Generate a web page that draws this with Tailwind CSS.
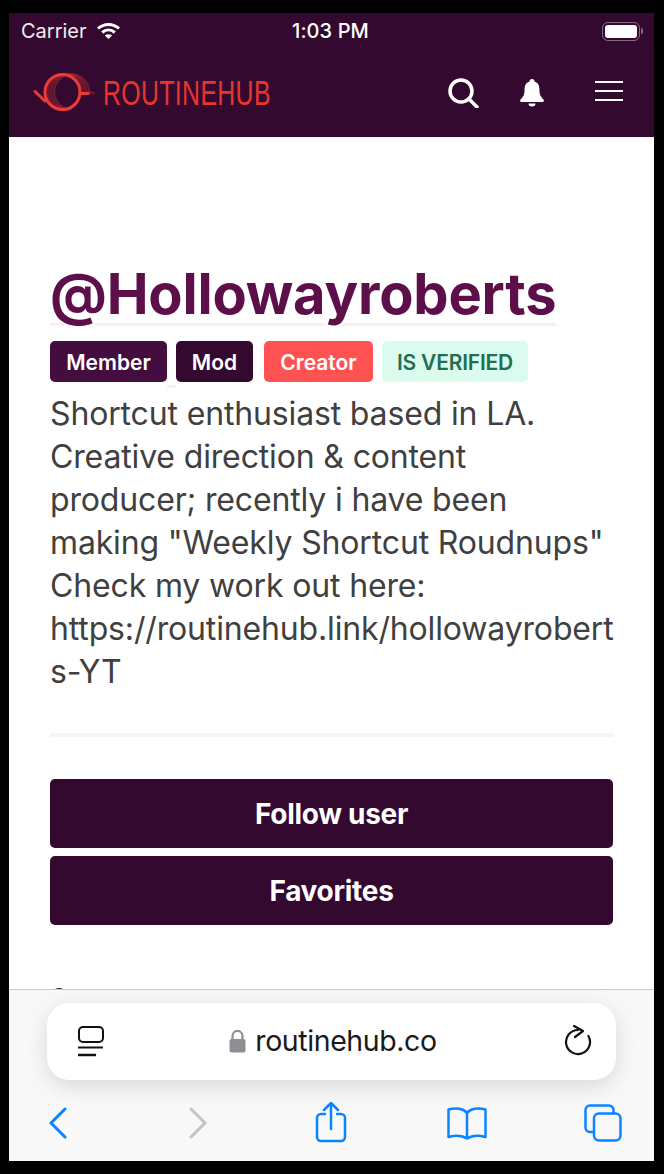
<!DOCTYPE html>
<html>
<head>
<meta charset="utf-8">
<script src="https://cdn.jsdelivr.net/npm/@tailwindcss/browser@4"></script>
</head>
<body class="bg-black">
<div class="w-[664px] h-[1174px] bg-black pt-[13px] pb-[13px] pr-[10px] pl-[9px] overflow-hidden">
  <div class="w-[645px] h-[1148px] flex flex-col bg-white overflow-hidden">
    <!-- header -->
    <header class="h-[124px] shrink-0 bg-[#340930] flex flex-col text-white font-['Inter',sans-serif]">
      <div class="h-[36px] relative flex items-center pl-[12px] pr-[12px] justify-between">
        <div class="flex items-center gap-[9px]">
          <span class="text-[20px] text-[#f2edf1] leading-none">Carrier</span>
          <svg width="25" height="18" viewBox="0 0 25 18" fill="none" stroke="#fff" stroke-width="3"><path d="M2 6.500C8 1 17 1 23 6.500"/><path d="M6.200 10.500C10 7.200 15 7.200 18.800 10.500"/><path d="M12.500 17l-3.600-3.600c2-1.600 5.200-1.600 7.200 0z" fill="#fff" stroke="none"/></svg>
        </div>
        <span class="absolute left-[283px] top-[8px] text-[20px] font-medium leading-[20px] tracking-[0.1px]">1:03 PM</span>
        <div class="flex items-center gap-[1px] mr-[-1px]">
          <div class="w-[38px] h-[19px] rounded-[6px] border-[1.500px] border-white/40 p-[2px]"><div class="w-full h-full rounded-[3px] bg-white"></div></div>
          <div class="w-[2px] h-[6px] bg-white/40 rounded-r"></div>
        </div>
      </div>
      <div class="flex-1 flex items-center pl-[24px] pb-[1px]">
        <svg width="66" height="42" viewBox="0 0 66 42" fill="none" class="shrink-0">
          <g stroke="#ef3b36" stroke-opacity=".3" stroke-width="2.500">
            <path d="M32.500 37.500A17.500 17.500 0 1 1 50 20l4 1.500"/>
            <path d="M35.500 37.500A17.500 17.500 0 1 1 53 20l4 1.500"/>
            <path d="M38.500 37.500A17.500 17.500 0 1 1 56 20l6 1.500"/>
          </g>
          <circle cx="29.500" cy="20" r="17.500" stroke="#ef3b36" stroke-width="3"/>
          <path d="M2 19.500L12 29M47 21.500H55" stroke="#ef3b36" stroke-width="3" stroke-linecap="round"/>
        </svg>
        <span class="ml-[4px] text-[#e8362f] text-[35px] leading-none font-['Liberation_Sans',sans-serif] inline-block origin-left scale-x-[0.71] tracking-[0.5px] whitespace-nowrap">ROUTINEHUB</span>
      </div>
      <div class="absolute left-[447px] top-[78px] flex items-center">
        <svg width="32" height="30" viewBox="0 0 32 30" fill="none" stroke="#fff" stroke-width="3.500"><circle cx="14" cy="13" r="11"/><path d="M22 21l8 8" stroke-linecap="round"/></svg>
        <svg width="26" height="28" viewBox="0 0 26 28" fill="#fff" class="ml-[40px]"><path d="M13 0a2.500 2.500 0 0 1 2.500 2.500C20 4 20.500 8 20.500 12c0 4 1.500 6 4 8.500.800 1 .3 2.500-1 2.500H2.500c-1.300 0-1.800-1.500-1-2.500 2.500-2.500 4-4.500 4-8.500 0-4 .5-8 5-9.500A2.500 2.500 0 0 1 13 0z"/><path d="M9.500 24.500h7a3.500 3 0 0 1-7 0z"/></svg>
        <div class="ml-[50px] mt-[-4px] w-[28px] flex flex-col gap-[7px]">
          <div class="h-[2px] bg-white"></div><div class="h-[1.500px] bg-white"></div><div class="h-[2px] bg-white"></div>
        </div>
      </div>
    </header>
    <!-- content -->
    <main class="flex-1 min-h-0 overflow-hidden px-[41px] pt-[125px] font-['Inter',sans-serif]">
      <h1 class="h-[64px] text-[56px] font-bold leading-[64px] text-[#5d0f49] tracking-[-0.2px] whitespace-nowrap underline decoration-[3px] decoration-[#fbeeee] underline-offset-[9px]">@Hollowayroberts</h1>
      <div class="relative flex gap-[9px] mt-[15px]">
        <span class="h-[41px] w-[117px] pt-[2px] flex items-center justify-center rounded-[5px] bg-[#440d40] text-white text-[21px] font-semibold">Member</span>
        <span class="h-[41px] w-[77px] pt-[2px] flex items-center justify-center rounded-[5px] bg-[#340930] text-white text-[21px] font-semibold">Mod</span>
        <span class="h-[41px] w-[109px] pt-[2px] flex items-center justify-center rounded-[5px] bg-[#ff5252] text-white text-[21px] font-semibold ml-[2px]">Creator</span>
        <span class="h-[41px] w-[146px] pt-[2px] flex items-center justify-center rounded-[5px] bg-[#dafbee] text-[#1f7050] text-[21px] font-semibold tracking-[-0.2px] whitespace-nowrap">IS VERIFIED</span>
        <div class="absolute left-[117px] top-[44px] w-[9px] h-[3px] bg-[#fbeeee]"></div>
      </div>
      <p class="w-[563px] mt-[10px] text-[32px] leading-[43px] text-[#404040] tracking-[-0.15px] whitespace-nowrap">Shortcut enthusiast based in LA.<br>Creative direction &amp; content<br>producer; recently i have been<br>making "Weekly Shortcut Roudnups"<br>Check my work out here:<br>https://routinehub.link/hollowayrobert<br>s-YT</p>
      <div class="w-[563px] h-[4px] bg-[#f5f5f5] mt-[40px]"></div>
      <button class="block w-[563px] h-[69px] mt-[42px] rounded-[5px] bg-[#340930] text-white text-[28px] font-bold tracking-[-0.3px]">Follow user</button>
      <button class="block w-[563px] h-[69px] mt-[8px] rounded-[5px] bg-[#340930] text-white text-[28px] font-bold tracking-[-0.3px]">Favorites</button>
      <p class="mt-[54px] text-[28px] leading-[40px] text-[#333]">S</p>
    </main>
    <!-- safari bar -->
    <footer class="h-[172px] shrink-0 bg-[#f8f8f8] border-t border-[#c9c9c9] font-['Inter',sans-serif]">
      <div class="mt-[13px] ml-[38px] w-[569px] h-[77px] bg-white rounded-[22px] shadow-[0_6px_22px_rgba(0,0,0,0.13)] flex items-center justify-between pl-[30px] pr-[24px]">
        <svg width="27" height="32" viewBox="0 0 27 32" fill="none" stroke="#111" stroke-width="2"><rect x="2" y="1" width="24" height="15" rx="4"/><path d="M1 21.500h25"/><path d="M1 29h18" stroke-width="2.500"/></svg>
        <div class="flex items-center gap-[9px] text-[#1a1a1a] ml-[-2px]">
          <svg width="17" height="23" viewBox="0 0 17 23" fill="none"><rect x="0.500" y="9" width="16" height="13.500" rx="2" fill="#8e8e93"/><path d="M3.500 10V6a5 5 0 0 1 10 0v4" stroke="#8e8e93" stroke-width="2.200"/></svg>
          <span class="text-[28.500px] leading-none tracking-[-0.4px]">routinehub.co</span>
        </div>
        <svg width="28" height="33" viewBox="0 0 28 33" fill="none" stroke="#111" stroke-width="2.200" stroke-linecap="round" stroke-linejoin="round"><path d="M14 5a12 12 0 1 0 10.400 6"/><path d="M10 1l9 5-8 6"/></svg>
      </div>
      <div class="mt-[22px] ml-[40px] flex items-start h-[42px]">
        <svg width="18" height="32" viewBox="0 0 18 32" fill="none" stroke="#0a84ff" stroke-width="3" stroke-linecap="round" stroke-linejoin="round" class="mt-[5px]"><path d="M16 2L2 16l14 14"/></svg>
        <svg width="18" height="32" viewBox="0 0 18 32" fill="none" stroke="#c3c3c5" stroke-width="3" stroke-linecap="round" stroke-linejoin="round" class="mt-[5px] ml-[122px]"><path d="M2 2l14 14L2 30"/></svg>
        <svg width="32" height="41" viewBox="0 0 32 41" fill="none" stroke="#0a84ff" stroke-width="2.500" stroke-linecap="round" stroke-linejoin="round" class="ml-[108px]"><path d="M10 12H6a4 4 0 0 0-4 4v19a4 4 0 0 0 4 4h20a4 4 0 0 0 4-4V16a4 4 0 0 0-4-4h-4"/><path d="M16 27V2M9 8l7-7 7 7"/></svg>
        <svg width="40" height="33" viewBox="0 0 40 33" fill="none" stroke="#0a84ff" stroke-width="2.500" stroke-linejoin="round" class="ml-[100px] mt-[5px]"><path d="M20 6C17 2 9 0 1.500 2.500V30c7-2 14-1.500 18.500 1.500C24.500 28.500 31.500 28 38.500 30V2.500C31 0 23 2 20 6z"/><path d="M20 6v25"/></svg>
        <svg width="38" height="38" viewBox="0 0 38 38" fill="none" stroke="#0a84ff" stroke-width="2.500" class="ml-[97px] mt-[2px]"><path d="M9 28H6a4.500 4.500 0 0 1-4.500-4.500V6A4.500 4.500 0 0 1 6 1.500h19A4.500 4.500 0 0 1 29.500 6v3"/><rect x="10" y="9.500" width="26.500" height="27" rx="5"/></svg>
      </div>
    </footer>
  </div>
</div>
</body>
</html>
